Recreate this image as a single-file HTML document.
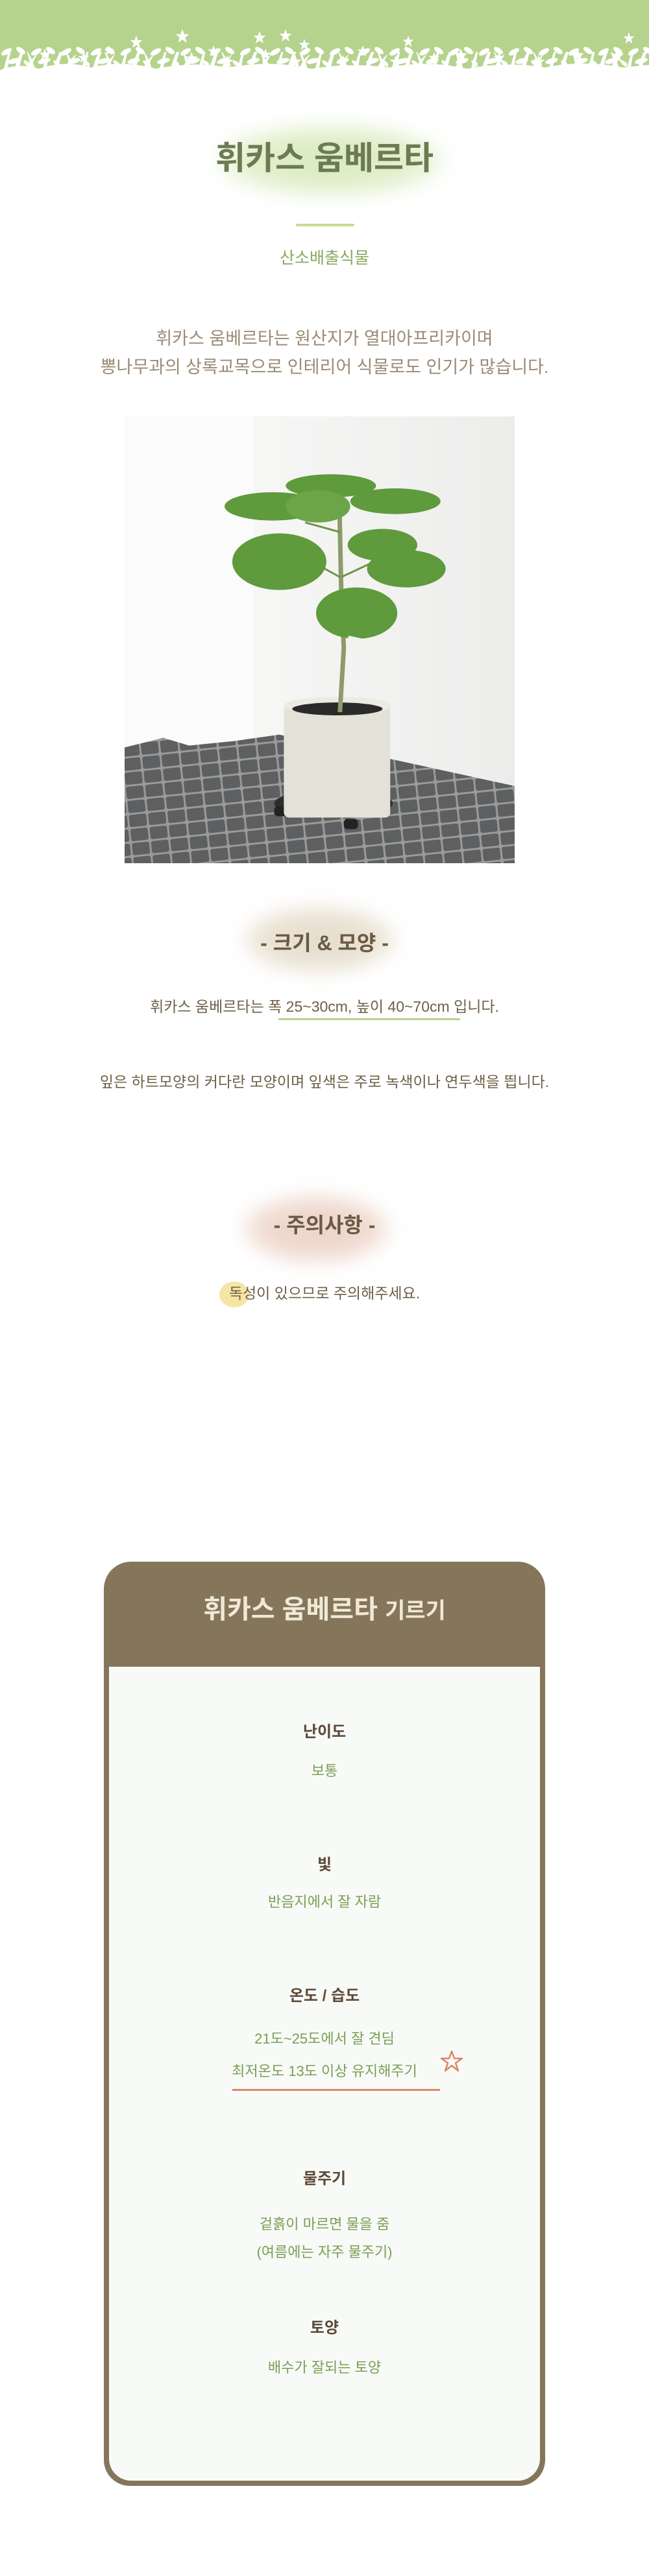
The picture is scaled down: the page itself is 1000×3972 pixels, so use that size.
<!DOCTYPE html>
<html><head><meta charset="utf-8">
<style>
*{margin:0;padding:0;box-sizing:border-box}
body{width:1000px;height:3972px;background:#fff;position:relative;overflow:hidden;font-family:"Liberation Sans","Noto Sans CJK KR",sans-serif}
.t{position:absolute;left:0;right:0;text-align:center;white-space:nowrap;line-height:1.2}
.blob{position:absolute;border-radius:50%;filter:blur(14px)}
</style></head><body>

<svg style="position:absolute;left:0;top:0" width="1000" height="127" viewBox="0 0 1000 127">
<defs>
<symbol id="fl" viewBox="-10 -10 20 20"><path d="M0,-10 L2.5,-3 L9.5,-3 L4,1.5 L6,9 L0,4.5 L-6,9 L-4,1.5 L-9.5,-3 L-2.5,-3Z" fill="#fff"/></symbol>
<pattern id="gr" width="60" height="80" patternUnits="userSpaceOnUse" x="0" y="47">
<path d="M2,80 Q8,40 20,20 Q12,45 10,80Z M18,80 Q26,35 44,14 Q30,45 26,80Z M34,80 Q40,50 58,36 Q46,55 42,80Z M48,80 Q50,55 40,30 Q56,50 56,80Z" fill="#fff"/>
</pattern>
<pattern id="lv" width="46" height="34" patternUnits="userSpaceOnUse" x="0" y="70">
<ellipse cx="10" cy="10" rx="9" ry="4" transform="rotate(-30 10 10)" fill="#fff"/>
<ellipse cx="32" cy="8" rx="8" ry="4" transform="rotate(35 32 8)" fill="#fff"/>
<ellipse cx="22" cy="24" rx="10" ry="4" transform="rotate(-15 22 24)" fill="#fff"/>
<ellipse cx="42" cy="28" rx="7" ry="3" transform="rotate(40 42 28)" fill="#fff"/>
</pattern>
</defs>
<rect width="1000" height="127" fill="#b5d38d"/>
<rect x="0" y="72" width="1000" height="55" fill="url(#lv)"/>
<rect x="0" y="80" width="1000" height="47" fill="url(#gr)"/>
<path d="M0,127 L0,108 Q30,96 60,106 Q100,92 140,104 Q190,92 240,106 Q300,94 350,104 Q420,92 480,106 Q540,96 600,104 Q660,92 720,106 Q780,94 840,104 Q900,92 960,104 L1000,100 L1000,127Z" fill="#fff"/>
<g>
<use href="#fl" x="200" y="55" width="20" height="20"/><use href="#fl" x="270" y="45" width="22" height="22"/><use href="#fl" x="320" y="70" width="18" height="18"/>
<use href="#fl" x="285" y="80" width="20" height="20"/><use href="#fl" x="390" y="48" width="20" height="20"/><use href="#fl" x="430" y="45" width="20" height="20"/>
<use href="#fl" x="460" y="60" width="18" height="18"/><use href="#fl" x="445" y="85" width="20" height="20"/><use href="#fl" x="400" y="75" width="18" height="18"/>
<use href="#fl" x="550" y="70" width="18" height="18"/><use href="#fl" x="620" y="55" width="18" height="18"/><use href="#fl" x="700" y="75" width="20" height="20"/>
<use href="#fl" x="760" y="80" width="18" height="18"/><use href="#fl" x="880" y="75" width="20" height="20"/><use href="#fl" x="960" y="50" width="18" height="18"/>
<use href="#fl" x="940" y="75" width="22" height="22"/><use href="#fl" x="340" y="85" width="20" height="20"/><use href="#fl" x="600" y="85" width="20" height="20"/>
<use href="#fl" x="60" y="75" width="18" height="18"/><use href="#fl" x="120" y="80" width="18" height="18"/><use href="#fl" x="820" y="85" width="20" height="20"/>
<use href="#fl" x="520" y="85" width="18" height="18"/><use href="#fl" x="160" y="70" width="16" height="16"/><use href="#fl" x="660" y="80" width="18" height="18"/>
</g>
</svg>

<div class="blob" style="left:330px;top:190px;width:360px;height:115px;background:radial-gradient(ellipse at center,#d7eabc 0%,#e3f0cf 55%,rgba(240,247,230,0) 75%)"></div>
<div class="t" style="top:214px;font-size:50px;font-weight:bold;color:#6c7b52">휘카스 움베르타</div>
<div style="position:absolute;left:456px;top:345px;width:90px;height:4px;border-radius:2px;background:#c5dc8f"></div>
<div class="t" style="top:383px;font-size:25px;color:#8aa860">산소배출식물</div>
<div class="t" style="top:500px;font-size:27px;color:#9b8a76;line-height:44px">휘카스 움베르타는 원산지가 열대아프리카이며<br>뽕나무과의 상록교목으로 인테리어 식물로도 인기가 많습니다.</div>

<svg style="position:absolute;left:192px;top:642px" width="601" height="689" viewBox="0 0 605 695" preserveAspectRatio="none">
<defs>
<pattern id="tl" width="30" height="22" patternUnits="userSpaceOnUse" patternTransform="rotate(-6)"><rect width="30" height="22" fill="#9a9a9a"/><rect x="1.5" y="1.5" width="27" height="19" rx="3" fill="#5d5f61"/></pattern>
<linearGradient id="wl" x1="0" x2="1"><stop offset="0" stop-color="#fdfdfd"/><stop offset="0.3" stop-color="#f7f7f6"/><stop offset="1" stop-color="#ecedeb"/></linearGradient>
</defs>
<rect width="605" height="695" fill="url(#wl)"/>
<rect x="0" y="0" width="200" height="520" fill="#fbfbfb"/>
<path d="M0,515 L60,500 L100,512 L170,505 L240,495 L605,575 L605,695 L0,695Z" fill="url(#tl)"/>
<ellipse cx="324" cy="602" rx="92" ry="22" fill="#2e2e30"/>
<rect x="232" y="606" width="22" height="16" rx="6" fill="#222"/><rect x="340" y="626" width="22" height="16" rx="6" fill="#222"/>
<rect x="247" y="448" width="165" height="176" rx="8" fill="#e4e2d8"/>
<ellipse cx="330" cy="450" rx="83" ry="14" fill="#ecebe2"/>
<ellipse cx="330" cy="455" rx="70" ry="10" fill="#2a2a2a"/>
<path d="M334,460 L340,360 L336,270 L333,130" stroke="#8d9a6a" stroke-width="7" fill="none"/>
<path d="M334,250 L280,220 M336,250 L400,220 M334,180 L280,165 M336,300 L390,280" stroke="#6f9448" stroke-width="3"/>
<g fill="#5f9a3d">
<ellipse cx="240" cy="226" rx="73" ry="44"/>
<ellipse cx="437" cy="237" rx="61" ry="29"/>
<ellipse cx="360" cy="306" rx="63" ry="40"/>
<ellipse cx="400" cy="200" rx="54" ry="25"/>
<ellipse cx="230" cy="140" rx="75" ry="22"/>
<ellipse cx="420" cy="132" rx="70" ry="20"/>
<ellipse cx="320" cy="108" rx="70" ry="18"/>
<ellipse cx="300" cy="140" rx="50" ry="25" fill="#6ba547"/>
</g>
<rect x="345" y="345" width="40" height="18" fill="#f2f2f0" transform="rotate(12 365 354)"/>
</svg>

<div class="blob" style="left:370px;top:1395px;width:245px;height:108px;background:radial-gradient(ellipse at center,#e5dccb 0%,#ebe4d6 55%,rgba(245,240,232,0) 75%)"></div>
<div class="t" style="top:1435px;font-size:32px;font-weight:bold;color:#6b5a44">- 크기 &amp; 모양 -</div>
<div class="t" style="top:1539px;font-size:23px;color:#6e6048">휘카스 움베르타는 폭 25~30cm, 높이 40~70cm 입니다.</div>
<div style="position:absolute;left:429px;top:1570px;width:280px;height:3px;background:#b9d38d"></div>
<div class="t" style="top:1655px;font-size:23px;color:#6e6048">잎은 하트모양의 커다란 모양이며 잎색은 주로 녹색이나 연두색을 띕니다.</div>

<div class="blob" style="left:370px;top:1840px;width:235px;height:110px;background:radial-gradient(ellipse at center,#ecd3c8 0%,#f0dcd2 55%,rgba(248,238,234,0) 75%)"></div>
<div class="t" style="top:1870px;font-size:32px;font-weight:bold;color:#6b5a44">- 주의사항 -</div>
<div style="position:absolute;left:338px;top:1976px;width:46px;height:40px;border-radius:50%;background:#f6e6a6"></div>
<div class="t" style="top:1981px;font-size:23px;color:#6e6048">독성이 있으므로 주의해주세요.</div>

<div style="position:absolute;left:160px;top:2408px;width:680px;height:1425px;background:#85755a;border-radius:42px 42px 40px 40px"></div>
<div style="position:absolute;left:168px;top:2570px;width:664px;height:1255px;background:#f8faf7;border-radius:0 0 34px 34px"></div>
<div class="t" style="top:2458px;font-size:40px;font-weight:bold;color:#efe9d6">휘카스 움베르타 <span style="font-size:34px">기르기</span></div>

<div class="t" style="top:2657px;font-size:24px;font-weight:bold;color:#5e4a38">난이도</div>
<div class="t" style="top:2718px;font-size:22px;color:#7a9e55">보통</div>
<div class="t" style="top:2862px;font-size:24px;font-weight:bold;color:#5e4a38">빛</div>
<div class="t" style="top:2920px;font-size:22px;color:#7a9e55">반음지에서 잘 자람</div>
<div class="t" style="top:3064px;font-size:24px;font-weight:bold;color:#5e4a38">온도 / 습도</div>
<div class="t" style="top:3131px;font-size:22px;color:#7a9e55">21도~25도에서 잘 견딤</div>
<div class="t" style="top:3181px;font-size:22px;color:#7a9e55">최저온도 13도 이상 유지해주기</div>
<div style="position:absolute;left:358px;top:3221px;width:320px;height:3px;background:#d9896a"></div>
<svg style="position:absolute;left:676px;top:3160px" width="40" height="36" viewBox="0 0 40 36"><path d="M20,3 L24,14 L36,14 L26,21 L30,33 L20,25 L10,33 L14,21 L4,14 L16,14Z" fill="none" stroke="#d9896a" stroke-width="2.5" stroke-linejoin="round"/></svg>
<div class="t" style="top:3346px;font-size:24px;font-weight:bold;color:#5e4a38">물주기</div>
<div class="t" style="top:3408px;font-size:22px;color:#7a9e55;line-height:43px">겉흙이 마르면 물을 줌<br>(여름에는 자주 물주기)</div>
<div class="t" style="top:3576px;font-size:24px;font-weight:bold;color:#5e4a38">토양</div>
<div class="t" style="top:3638px;font-size:22px;color:#7a9e55">배수가 잘되는 토양</div>
</body></html>
